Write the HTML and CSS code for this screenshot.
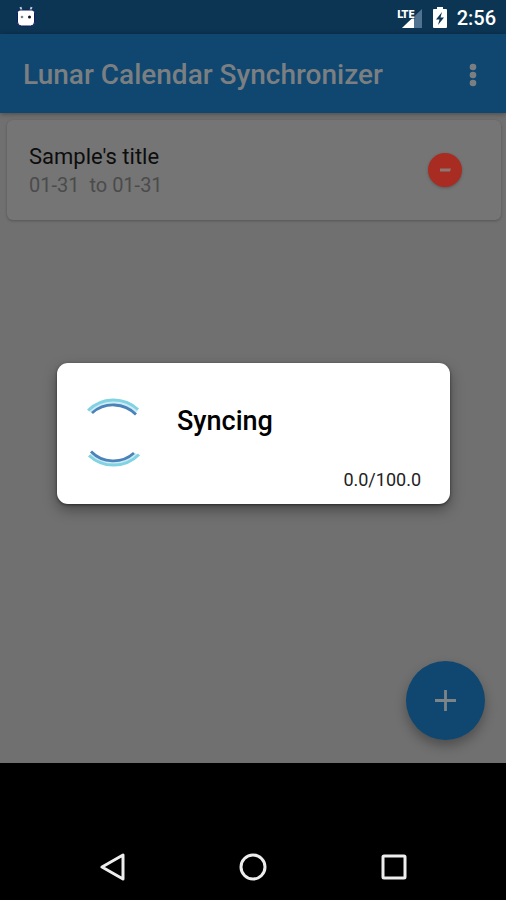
FILE: index.html
```html
<!DOCTYPE html>
<html lang="en">
<head>
<meta charset="utf-8">
<meta name="viewport" content="width=device-width, initial-scale=1">
<title>Lunar Calendar Synchronizer</title>
<link rel="stylesheet" href="styles.css">
</head>
<body>
<div class="status-bar">
  <svg class="status-robot" width="20" height="24" viewBox="0 0 20 24" aria-hidden="true">
    <path d="M4.500 1l1.500 5M15.500 1l-1.500 5" stroke="#b9cbdc" stroke-width="2" fill="none"/>
    <path d="M4 4h12q2.500 0 2.500 2.500V16q0 4-4 4h-9q-4 0-4-4V6.500Q1.500 4 4 4z" fill="#fff" stroke="#101a5c" stroke-width="1"/>
    <circle cx="6" cy="11" r="1.300" fill="#77808b"/>
    <circle cx="13.500" cy="11" r="1.500" fill="#10151f"/>
  </svg>
  <div class="status-right">
    <svg width="26" height="22" viewBox="0 0 26 22" aria-hidden="true">
      <path d="M25 2v19H5z" fill="#4f7390"/>
      <path d="M17 9.600V21H5z" fill="#fff"/>
      <text class="lte" x="0" y="11">LTE</text>
    </svg>
    <svg width="14" height="22" viewBox="0 0 14 22" aria-hidden="true">
      <path d="M4 0h6v2h3q1 0 1 1v17q0 1-1 1H1q-1 0-1-1V3q0-1 1-1h3z" fill="#fff"/>
      <path d="M9 5L3 12.500h3.500L5 18l6-7.500H7.500z" fill="#0c3453"/>
    </svg>
    <span class="clock">2:56</span>
  </div>
</div>
<header class="app-bar">
  <h1>Lunar Calendar Synchronizer</h1>
  <button class="more" aria-label="More options">
    <svg width="8" height="24" viewBox="0 0 8 24" fill="#7b7f82"><circle cx="4" cy="4" r="3.300"/><circle cx="4" cy="12" r="3.300"/><circle cx="4" cy="20" r="3.300"/></svg>
  </button>
</header>
<main class="content">
  <article class="card">
    <div>
      <h2>Sample's title</h2>
      <p class="dates">01-31&nbsp; to 01-31</p>
    </div>
    <button class="remove" aria-label="Remove">
      <svg width="12" height="4" viewBox="0 0 12 4"><path d="M1 .5h11l-1 3H1z" fill="#8b7774"/></svg>
    </button>
  </article>
  <button class="add" aria-label="Add">
    <svg width="21" height="21" viewBox="0 0 21 21"><path d="M10.500 0v21M0 10.500h21" stroke="#7d8488" stroke-width="2.800"/></svg>
  </button>
</main>
<nav class="nav-bar">
  <button aria-label="Back"><svg width="28" height="28" viewBox="0 0 28 28"><path d="M25 2v24L4 14z"/></svg></button>
  <button aria-label="Home"><svg width="28" height="28" viewBox="0 0 28 28"><circle cx="14" cy="14" r="12"/></svg></button>
  <button aria-label="Recent apps"><svg width="28" height="28" viewBox="0 0 28 28"><rect x="3" y="3" width="22" height="22" rx="1"/></svg></button>
</nav>
<div class="overlay">
  <div class="dialog" role="dialog" aria-labelledby="sync-label">
    <svg class="spinner" width="54" height="72" viewBox="0 0 54 72" fill="none" aria-hidden="true">
      <path d="M3 14.500A35 35 0 0 1 50 14.500M3 57.500A35 35 0 0 0 50 57.500" stroke="#cceaf7" stroke-width="4"/>
      <path d="M1 13.500A36 36 0 0 1 51 12.500M2 58.500A36 36 0 0 0 52 57.500" stroke="#81d3e2" stroke-width="3"/>
      <path d="M5 16A32 32 0 0 1 49 17.500M4 54.500A31 31 0 0 0 47 56" stroke="#4b83b8" stroke-width="2.800"/>
    </svg>
    <p class="sync-label" id="sync-label">Syncing</p>
    <p class="progress">0.0/100.0</p>
  </div>
</div>
</body>
</html>
```
FILE: styles.css
```css
* {
  box-sizing: border-box;
}

body {
  position: relative;
  display: flex;
  flex-direction: column;
  min-height: 100vh;
  margin: 0;
  background: #707070;
  font-family: Roboto, "Liberation Sans", sans-serif;
}

h1, h2, p {
  margin: 0;
}

button {
  display: flex;
  align-items: center;
  justify-content: center;
  padding: 0;
  border: 0;
  background: none;
}

svg {
  display: block;
}

.status-bar {
  display: flex;
  align-items: center;
  justify-content: space-between;
  height: 34px;
  padding: 2px 10px 0 16px;
  background: #0c3453;
}

.status-right {
  display: flex;
  align-items: center;
  gap: 10px;
}

.lte {
  fill: #fff;
  stroke: #0c3453;
  stroke-width: 1px;
  paint-order: stroke;
  font: 700 11px "Liberation Sans Narrow", "DejaVu Sans Condensed", sans-serif;
}

.clock {
  color: #fff;
  font-size: 20px;
  font-weight: 500;
  line-height: 24px;
}

.app-bar {
  position: relative;
  display: flex;
  align-items: center;
  justify-content: space-between;
  height: 79px;
  padding: 2px 24px 0 23px;
  background: #0f4770;
  box-shadow: 0 1px 5px rgba(0, 0, 0, 0.35);
}

.app-bar h1 {
  color: #7b7f82;
  font-size: 28px;
  font-weight: 500;
  line-height: 32px;
}

.more {
  width: 18px;
  height: 32px;
}

.content {
  display: flex;
  flex: 1;
  flex-direction: column;
  justify-content: space-between;
  padding: 7px 5px 23px 7px;
}

.card {
  display: flex;
  align-items: center;
  justify-content: space-between;
  height: 100px;
  padding: 0 39px 0 22px;
  border-radius: 6px;
  background: #757575;
  box-shadow: 0 1px 3px rgba(0, 0, 0, 0.25);
}

.card h2 {
  padding-top: 2px;
  color: #0d0d0d;
  font-size: 22px;
  font-weight: 400;
  line-height: 28px;
}

.dates {
  color: #4b4b4b;
  font-size: 20px;
  line-height: 28px;
}

.remove {
  width: 34px;
  height: 34px;
  border-radius: 50%;
  background: #a82c22;
  box-shadow: 0 1px 3px rgba(0, 0, 0, 0.25);
}

.add {
  align-self: flex-end;
  width: 79px;
  height: 79px;
  margin-right: 16px;
  border-radius: 50%;
  background: #0f4770;
  box-shadow: 0 6px 12px rgba(0, 0, 0, 0.3);
}

.nav-bar {
  display: flex;
  align-items: flex-end;
  justify-content: space-around;
  height: 137px;
  padding: 0 42px 19px;
  background: #000;
}

.nav-bar svg {
  fill: none;
  stroke: #eee;
  stroke-width: 3px;
  stroke-linejoin: round;
}

.overlay {
  position: absolute;
  inset: 0;
  display: flex;
  align-items: center;
  justify-content: center;
  padding: 0 56px 33px 57px;
}

.dialog {
  display: grid;
  flex: 1;
  grid-template-columns: 54px 1fr;
  grid-template-rows: 48px 1fr;
  column-gap: 36px;
  height: 141px;
  padding: 34px 29px 12px 30px;
  border-radius: 11px;
  background: #fff;
  box-shadow: 0 6px 14px rgba(0, 0, 0, 0.35), 0 1px 3px rgba(0, 0, 0, 0.5);
}

.spinner {
  grid-row: 1 / 3;
}

.sync-label {
  color: #000;
  font-size: 27px;
  font-weight: 500;
  line-height: 48px;
}

.progress {
  color: #222;
  font-size: 18px;
  line-height: 24px;
  text-align: right;
  align-self: end;
}
```
